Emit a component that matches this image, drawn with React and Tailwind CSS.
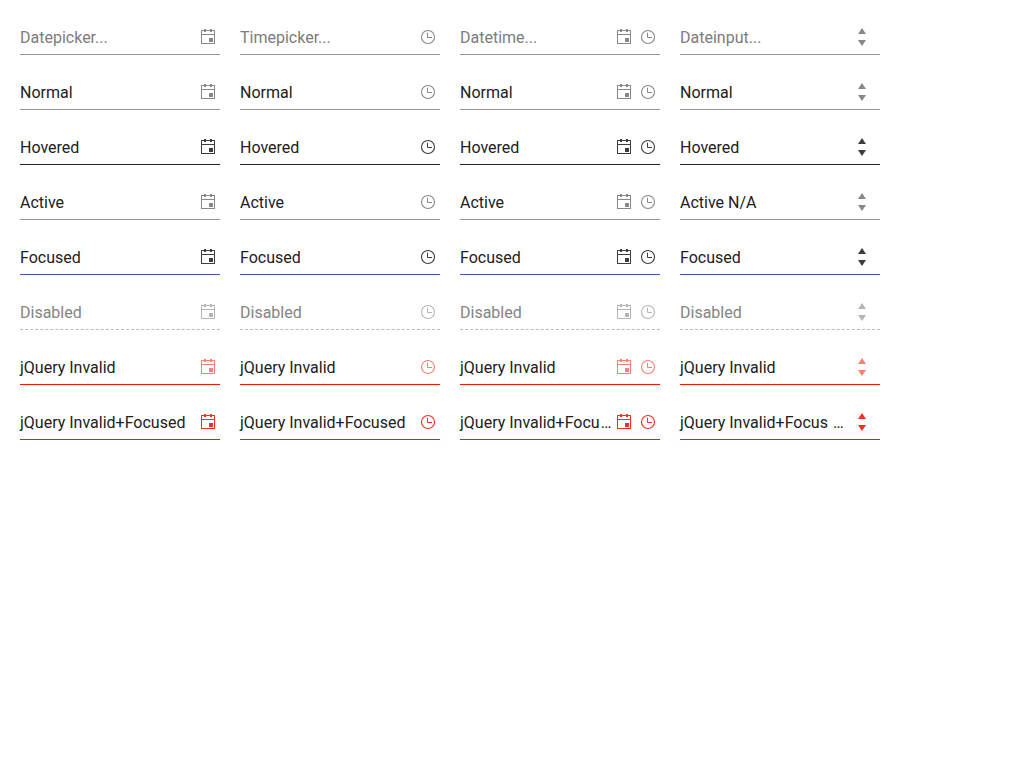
const ROWS = [
  { label: null, text: 'text-[#7c7c7c]', icon: 'text-[#888888]', line: 'border-[#949494]' },
  { label: 'Normal', text: 'text-[#212121]', icon: 'text-[#888888]', line: 'border-[#949494]' },
  { label: 'Hovered', text: 'text-[#212121]', icon: 'text-[#3d3d3d]', line: 'border-[#212121]' },
  { label: 'Active', text: 'text-[#212121]', icon: 'text-[#888888]', line: 'border-[#949494]', spinLabel: 'Active N/A' },
  { label: 'Focused', text: 'text-[#212121]', icon: 'text-[#3d3d3d]', line: 'border-[#3f51b5]' },
  { label: 'Disabled', text: 'text-[#848484]', icon: 'text-[#b5b5b5]', line: 'border-[#bdbdbd] border-dashed' },
  { label: 'jQuery Invalid', text: 'text-[#212121]', icon: 'text-[#fa8072]', line: 'border-[#f31700]' },
  {
    label: 'jQuery Invalid+Focused',
    text: 'text-[#212121]',
    icon: 'text-[#f6301e]',
    line: 'border-[#f31700]',
    pairLabel: (
      <>
        jQuery Invalid+Focu<span className="ml-px">…</span>
      </>
    ),
    spinLabel: (
      <>
        jQuery Invalid+Focus <span className="ml-px">…</span>
      </>
    ),
  },
];

const COLUMNS = [
  { placeholder: 'Datepicker...', icons: ['calendar'] },
  { placeholder: 'Timepicker...', icons: ['clock'] },
  { placeholder: 'Datetime...', icons: ['calendar', 'clock'], labelKey: 'pairLabel' },
  { placeholder: 'Dateinput...', icons: ['spin'], labelKey: 'spinLabel' },
];

function Calendar() {
  return (
    <svg width="16" height="16" viewBox="0 0 16 16" fill="currentColor" shapeRendering="crispEdges">
      <path d="M1 1h14v14H1zM2 2v3h12V2zM2 6v8h12V6z" fillRule="evenodd" />
      <path d="M4 0h2v3H4zM10 0h2v3h-2zM9 9h4v4H9z" />
    </svg>
  );
}

function Clock() {
  return (
    <svg width="16" height="16" viewBox="0 0 16 16" fill="none" stroke="currentColor">
      <circle cx="8" cy="8" r="6.5" strokeWidth="1.1" />
      <path d="M7.5 3.7v4.8H12" />
    </svg>
  );
}

function Spin() {
  return (
    <svg width="8" height="18" viewBox="0 0 8 18" fill="currentColor">
      <path d="M4 0l4 6H0zM0 12h8l-4 6z" />
    </svg>
  );
}

const ICONS = { calendar: Calendar, clock: Clock, spin: Spin };

function Field({ row, column }) {
  const label = row.label ? row[column.labelKey] || row.label : column.placeholder;
  const spin = column.icons[0] === 'spin';
  return (
    <div className={`flex h-[35px] w-[200px] items-center border-b ${row.line}`}>
      <span className={`min-w-0 flex-1 whitespace-nowrap pt-0.5 text-base leading-6 ${row.text}`}>{label}</span>
      <span className={`flex shrink-0 ${row.icon} ${spin ? 'pr-[14px]' : 'gap-2 pr-1'}`}>
        {column.icons.map((name) => {
          const Icon = ICONS[name];
          return <Icon key={name} />;
        })}
      </span>
    </div>
  );
}

export default function App() {
  return (
    <main className="grid min-h-screen w-[880px] grid-cols-[repeat(4,200px)] content-start gap-5 bg-white pt-5 pl-5 font-['Roboto',sans-serif]">
      {ROWS.map((row, r) => COLUMNS.map((column, c) => <Field key={`${r}-${c}`} row={row} column={column} />))}
    </main>
  );
}
